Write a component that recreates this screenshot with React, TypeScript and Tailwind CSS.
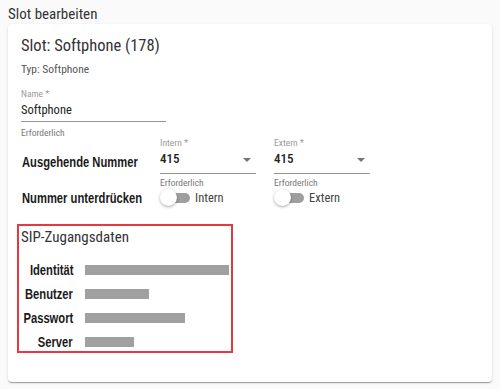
import { useState } from 'react';

const sipRows = [
  { label: 'Identität', width: 144 },
  { label: 'Benutzer', width: 64 },
  { label: 'Passwort', width: 100 },
  { label: 'Server', width: 49 },
];

function Toggle({ label }: { label: string }) {
  const [on, setOn] = useState(false);
  return (
    <button type="button" onClick={() => setOn(!on)} className="flex h-[22px] items-center">
      <span className="relative flex h-[22px] w-[30px] items-center">
        <span className="ml-[4px] h-[10px] w-[26px] rounded-full bg-[#9e9e9e]" />
        <span
          className={
            on
              ? 'absolute left-[13px] top-[2px] h-[17px] w-[17px] rounded-full bg-[#1976d2] shadow-[0_1px_3px_rgba(0,0,0,0.35)]'
              : 'absolute left-0 top-[2px] h-[17px] w-[17px] rounded-full bg-white shadow-[0_1px_3px_rgba(0,0,0,0.35)]'
          }
        />
      </span>
      <span className="ml-[5px] text-[12.5px] leading-4 text-[#444]">{label}</span>
    </button>
  );
}

function BoldLabel({ children, right }: { children: string; right?: boolean }) {
  return (
    <span
      className={
        (right ? 'origin-right ' : 'origin-left ') +
        'inline-block scale-x-[0.8] whitespace-nowrap font-["Liberation_Sans",sans-serif] text-[14px] font-bold leading-4 text-[#1a1a1a] [font-stretch:100%]'
      }
    >
      {children}
    </span>
  );
}

export default function App() {
  return (
    <div className="min-h-[389px] bg-[#fafafa] px-2 font-['Roboto',sans-serif] [font-stretch:75%]">
      <div className="h-6 pt-[2px] text-[15px] leading-6 text-[#333]">Slot bearbeiten</div>

      <div className="rounded-[4px] bg-white pb-[29px] pl-[13px] pr-4 pt-[10px] shadow-[0_2px_1px_-1px_rgba(0,0,0,0.2),0_1px_1px_0_rgba(0,0,0,0.14),0_1px_3px_0_rgba(0,0,0,0.12)]">
        <h2 className="text-[16.5px] leading-6 text-[#333]">Slot: Softphone (178)</h2>
        <div className="mt-[3px] text-[11.5px] leading-4 text-[#555]">Typ: Softphone</div>

        <div className="mt-[11px] w-[145px]">
          <div className="text-[9.5px] leading-3 text-[#9a9a9a]">Name *</div>
          <div className="mt-[2px] border-b border-[#949494] pb-[3px] text-[12.5px] leading-4 text-[#222]">
            Softphone
          </div>
        </div>
        <div className="mt-[5px] text-[9.5px] leading-3 text-[#777]">Erforderlich</div>

        <div className="-mt-[2px] grid grid-cols-[139px_114px_96px] grid-rows-[12px_25px_13px_22px]">
          <div className="col-start-2 row-start-1 text-[9.5px] leading-3 text-[#9a9a9a]">Intern *</div>
          <div className="col-start-3 row-start-1 text-[9.5px] leading-3 text-[#9a9a9a]">Extern *</div>

          <div className="col-start-1 row-start-2 flex items-center pl-[1px]">
            <BoldLabel>Ausgehende Nummer</BoldLabel>
          </div>
          {['415', '415'].map((v, i) => (
            <div
              key={i}
              className={
                (i === 0 ? 'col-start-2 ' : 'col-start-3 ') +
                'row-start-2 mt-[2px] flex w-[96px] items-start justify-between border-b border-[#949494] pr-[5px]'
              }
            >
              <span className="text-[13px] font-medium leading-4 text-[#222]">{v}</span>
              <svg width="8" height="4" viewBox="0 0 8 4" className="mt-[7px]">
                <path d="M0 0h8L4 4z" fill="#757575" />
              </svg>
            </div>
          ))}

          <div className="col-start-2 row-start-3 pt-[3px] text-[9.5px] leading-3 text-[#777]">Erforderlich</div>
          <div className="col-start-3 row-start-3 pt-[3px] text-[9.5px] leading-3 text-[#777]">Erforderlich</div>

          <div className="col-start-1 row-start-4 flex items-center pl-[1px]">
            <BoldLabel>Nummer unterdrücken</BoldLabel>
          </div>
          <div className="col-start-2 row-start-4">
            <Toggle label="Intern" />
          </div>
          <div className="col-start-3 row-start-4">
            <Toggle label="Extern" />
          </div>
        </div>

        <div className="-ml-1 mt-[15px] w-[216px] border-2 border-[#e53841] pb-[3px] pl-[2px] pt-[1px]">
          <div className="text-[15px] leading-5 text-[#333]">SIP-Zugangsdaten</div>
          <div className="mt-[17px] grid grid-cols-[52px_1fr] gap-x-3 gap-y-3">
            {sipRows.map((r) => (
              <div key={r.label} className="contents">
                <div className="flex h-3 items-center justify-end">
                  <BoldLabel right>{r.label}</BoldLabel>
                </div>
                <div className="flex h-3 items-center">
                  <div className="h-[10px] bg-[#a0a0a0]" style={{ width: r.width }} />
                </div>
              </div>
            ))}
          </div>
        </div>
      </div>
    </div>
  );
}
